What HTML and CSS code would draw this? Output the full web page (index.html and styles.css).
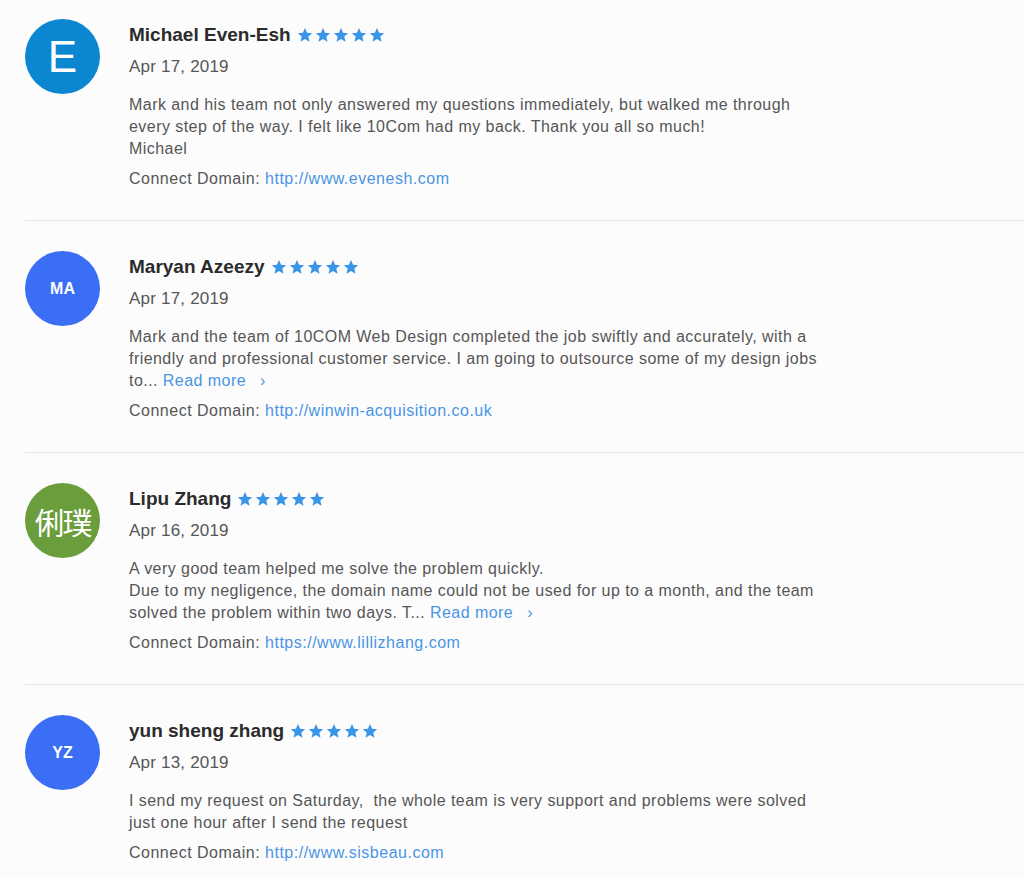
FILE: index.html
```html
<!DOCTYPE html>
<html lang="en">
<head>
    <meta charset="UTF-8">
    <meta name="viewport" content="width=device-width, initial-scale=1.0">
    <title>Reviews</title>
    <link rel="stylesheet" href="styles.css">
</head>
<body>

    <div class="reviews">

        <!-- Review 1 -->
        <div class="review">
            <div class="avatar avatar-letter">E</div>
            <div class="review-body">
                <div class="review-head">
                    <span class="reviewer">Michael Even-Esh</span>
                    <span class="stars">
                        <svg viewBox="0 0 24 24"><path d="M12 1.5l3.1 7.1 7.7.7-5.8 5.1 1.7 7.6L12 18l-6.7 4 1.7-7.6-5.8-5.1 7.7-.7z"/></svg>
                        <svg viewBox="0 0 24 24"><path d="M12 1.5l3.1 7.1 7.7.7-5.8 5.1 1.7 7.6L12 18l-6.7 4 1.7-7.6-5.8-5.1 7.7-.7z"/></svg>
                        <svg viewBox="0 0 24 24"><path d="M12 1.5l3.1 7.1 7.7.7-5.8 5.1 1.7 7.6L12 18l-6.7 4 1.7-7.6-5.8-5.1 7.7-.7z"/></svg>
                        <svg viewBox="0 0 24 24"><path d="M12 1.5l3.1 7.1 7.7.7-5.8 5.1 1.7 7.6L12 18l-6.7 4 1.7-7.6-5.8-5.1 7.7-.7z"/></svg>
                        <svg viewBox="0 0 24 24"><path d="M12 1.5l3.1 7.1 7.7.7-5.8 5.1 1.7 7.6L12 18l-6.7 4 1.7-7.6-5.8-5.1 7.7-.7z"/></svg>
                    </span>
                </div>
                <div class="review-date">Apr 17, 2019</div>
                <p class="review-text">Mark and his team not only answered my questions immediately, but walked me through<br>every step of the way. I felt like 10Com had my back. Thank you all so much!<br>Michael</p>
                <div class="domain">Connect Domain: <a href="#">http://www.evenesh.com</a></div>
            </div>
        </div>

        <!-- Review 2 -->
        <div class="review">
            <div class="avatar avatar-initials">MA</div>
            <div class="review-body">
                <div class="review-head">
                    <span class="reviewer">Maryan Azeezy</span>
                    <span class="stars">
                        <svg viewBox="0 0 24 24"><path d="M12 1.5l3.1 7.1 7.7.7-5.8 5.1 1.7 7.6L12 18l-6.7 4 1.7-7.6-5.8-5.1 7.7-.7z"/></svg>
                        <svg viewBox="0 0 24 24"><path d="M12 1.5l3.1 7.1 7.7.7-5.8 5.1 1.7 7.6L12 18l-6.7 4 1.7-7.6-5.8-5.1 7.7-.7z"/></svg>
                        <svg viewBox="0 0 24 24"><path d="M12 1.5l3.1 7.1 7.7.7-5.8 5.1 1.7 7.6L12 18l-6.7 4 1.7-7.6-5.8-5.1 7.7-.7z"/></svg>
                        <svg viewBox="0 0 24 24"><path d="M12 1.5l3.1 7.1 7.7.7-5.8 5.1 1.7 7.6L12 18l-6.7 4 1.7-7.6-5.8-5.1 7.7-.7z"/></svg>
                        <svg viewBox="0 0 24 24"><path d="M12 1.5l3.1 7.1 7.7.7-5.8 5.1 1.7 7.6L12 18l-6.7 4 1.7-7.6-5.8-5.1 7.7-.7z"/></svg>
                    </span>
                </div>
                <div class="review-date">Apr 17, 2019</div>
                <p class="review-text">Mark and the team of 10COM Web Design completed the job swiftly and accurately, with a<br>friendly and professional customer service. I am going to outsource some of my design jobs<br>to... <a class="read-more" href="#">Read more</a><span class="chevron">›</span></p>
                <div class="domain">Connect Domain: <a href="#">http://winwin-acquisition.co.uk</a></div>
            </div>
        </div>

        <!-- Review 3 -->
        <div class="review">
            <div class="avatar avatar-cjk">俐璞</div>
            <div class="review-body">
                <div class="review-head">
                    <span class="reviewer">Lipu Zhang</span>
                    <span class="stars">
                        <svg viewBox="0 0 24 24"><path d="M12 1.5l3.1 7.1 7.7.7-5.8 5.1 1.7 7.6L12 18l-6.7 4 1.7-7.6-5.8-5.1 7.7-.7z"/></svg>
                        <svg viewBox="0 0 24 24"><path d="M12 1.5l3.1 7.1 7.7.7-5.8 5.1 1.7 7.6L12 18l-6.7 4 1.7-7.6-5.8-5.1 7.7-.7z"/></svg>
                        <svg viewBox="0 0 24 24"><path d="M12 1.5l3.1 7.1 7.7.7-5.8 5.1 1.7 7.6L12 18l-6.7 4 1.7-7.6-5.8-5.1 7.7-.7z"/></svg>
                        <svg viewBox="0 0 24 24"><path d="M12 1.5l3.1 7.1 7.7.7-5.8 5.1 1.7 7.6L12 18l-6.7 4 1.7-7.6-5.8-5.1 7.7-.7z"/></svg>
                        <svg viewBox="0 0 24 24"><path d="M12 1.5l3.1 7.1 7.7.7-5.8 5.1 1.7 7.6L12 18l-6.7 4 1.7-7.6-5.8-5.1 7.7-.7z"/></svg>
                    </span>
                </div>
                <div class="review-date">Apr 16, 2019</div>
                <p class="review-text">A very good team helped me solve the problem quickly.<br>Due to my negligence, the domain name could not be used for up to a month, and the team<br>solved the problem within two days. T... <a class="read-more" href="#">Read more</a><span class="chevron">›</span></p>
                <div class="domain">Connect Domain: <a href="#">https://www.lillizhang.com</a></div>
            </div>
        </div>

        <!-- Review 4 -->
        <div class="review">
            <div class="avatar avatar-initials">YZ</div>
            <div class="review-body">
                <div class="review-head">
                    <span class="reviewer">yun sheng zhang</span>
                    <span class="stars">
                        <svg viewBox="0 0 24 24"><path d="M12 1.5l3.1 7.1 7.7.7-5.8 5.1 1.7 7.6L12 18l-6.7 4 1.7-7.6-5.8-5.1 7.7-.7z"/></svg>
                        <svg viewBox="0 0 24 24"><path d="M12 1.5l3.1 7.1 7.7.7-5.8 5.1 1.7 7.6L12 18l-6.7 4 1.7-7.6-5.8-5.1 7.7-.7z"/></svg>
                        <svg viewBox="0 0 24 24"><path d="M12 1.5l3.1 7.1 7.7.7-5.8 5.1 1.7 7.6L12 18l-6.7 4 1.7-7.6-5.8-5.1 7.7-.7z"/></svg>
                        <svg viewBox="0 0 24 24"><path d="M12 1.5l3.1 7.1 7.7.7-5.8 5.1 1.7 7.6L12 18l-6.7 4 1.7-7.6-5.8-5.1 7.7-.7z"/></svg>
                        <svg viewBox="0 0 24 24"><path d="M12 1.5l3.1 7.1 7.7.7-5.8 5.1 1.7 7.6L12 18l-6.7 4 1.7-7.6-5.8-5.1 7.7-.7z"/></svg>
                    </span>
                </div>
                <div class="review-date">Apr 13, 2019</div>
                <p class="review-text">I send my request on Saturday,&nbsp; the whole team is very support and problems were solved<br>just one hour after I send the request</p>
                <div class="domain">Connect Domain: <a href="#">http://www.sisbeau.com</a></div>
            </div>
        </div>

    </div>

</body>
</html>
```

FILE: styles.css
```css
:root {
    --name-color: #2b2b2b;
    --text-color: #565656;
    --link-color: #4a95e3;
    --star-color: #3b95e6;
    --divider: #e3e3e3;
}

body {
    margin: 0;
    padding: 0;
    background: #fcfcfc;
    font-family: "Liberation Sans", Arial, sans-serif;
    color: var(--text-color);
}

.reviews {
    padding-left: 25px;
}

.review {
    display: flex;
    gap: 29px;
    padding: 30px 0 30px;
    border-bottom: 1px solid var(--divider);
}

.review:first-child {
    padding-top: 19px;
}

.review:last-child {
    border-bottom: none;
}

.avatar {
    flex: 0 0 75px;
    width: 75px;
    height: 75px;
    border-radius: 50%;
    display: flex;
    align-items: center;
    justify-content: center;
    color: white;
    background: #3a6ef5;
}

.avatar-letter {
    background: #0b87d2;
    font-size: 44px;
    font-weight: 400;
}

.avatar-initials {
    font-size: 16px;
    font-weight: 700;
}

.avatar-cjk {
    background: #6a9e3c;
    font-family: "Noto Sans CJK SC", sans-serif;
    font-size: 30px;
    letter-spacing: -2px;
}

.review-body {
    width: 780px;
}

.review-head {
    margin-top: 4px;
    line-height: 24px;
    display: flex;
    align-items: center;
    gap: 6px;
}

.reviewer {
    font-size: 19px;
    font-weight: 700;
    color: var(--name-color);
}

.stars {
    display: flex;
    gap: 2px;
}

.stars svg {
    width: 16px;
    height: 16px;
    fill: var(--star-color);
}

.review-date {
    margin-top: 9px;
    font-size: 17px;
    letter-spacing: 0.2px;
    line-height: 22px;
}

.review-text {
    margin: 16px 0 0;
    font-size: 16px;
    letter-spacing: 0.45px;
    line-height: 22px;
}

.domain {
    margin-top: 8px;
    font-size: 16px;
    letter-spacing: 0.5px;
    line-height: 22px;
}

a {
    color: var(--link-color);
    text-decoration: none;
}

.chevron {
    margin-left: 14px;
    color: var(--link-color);
}
```
